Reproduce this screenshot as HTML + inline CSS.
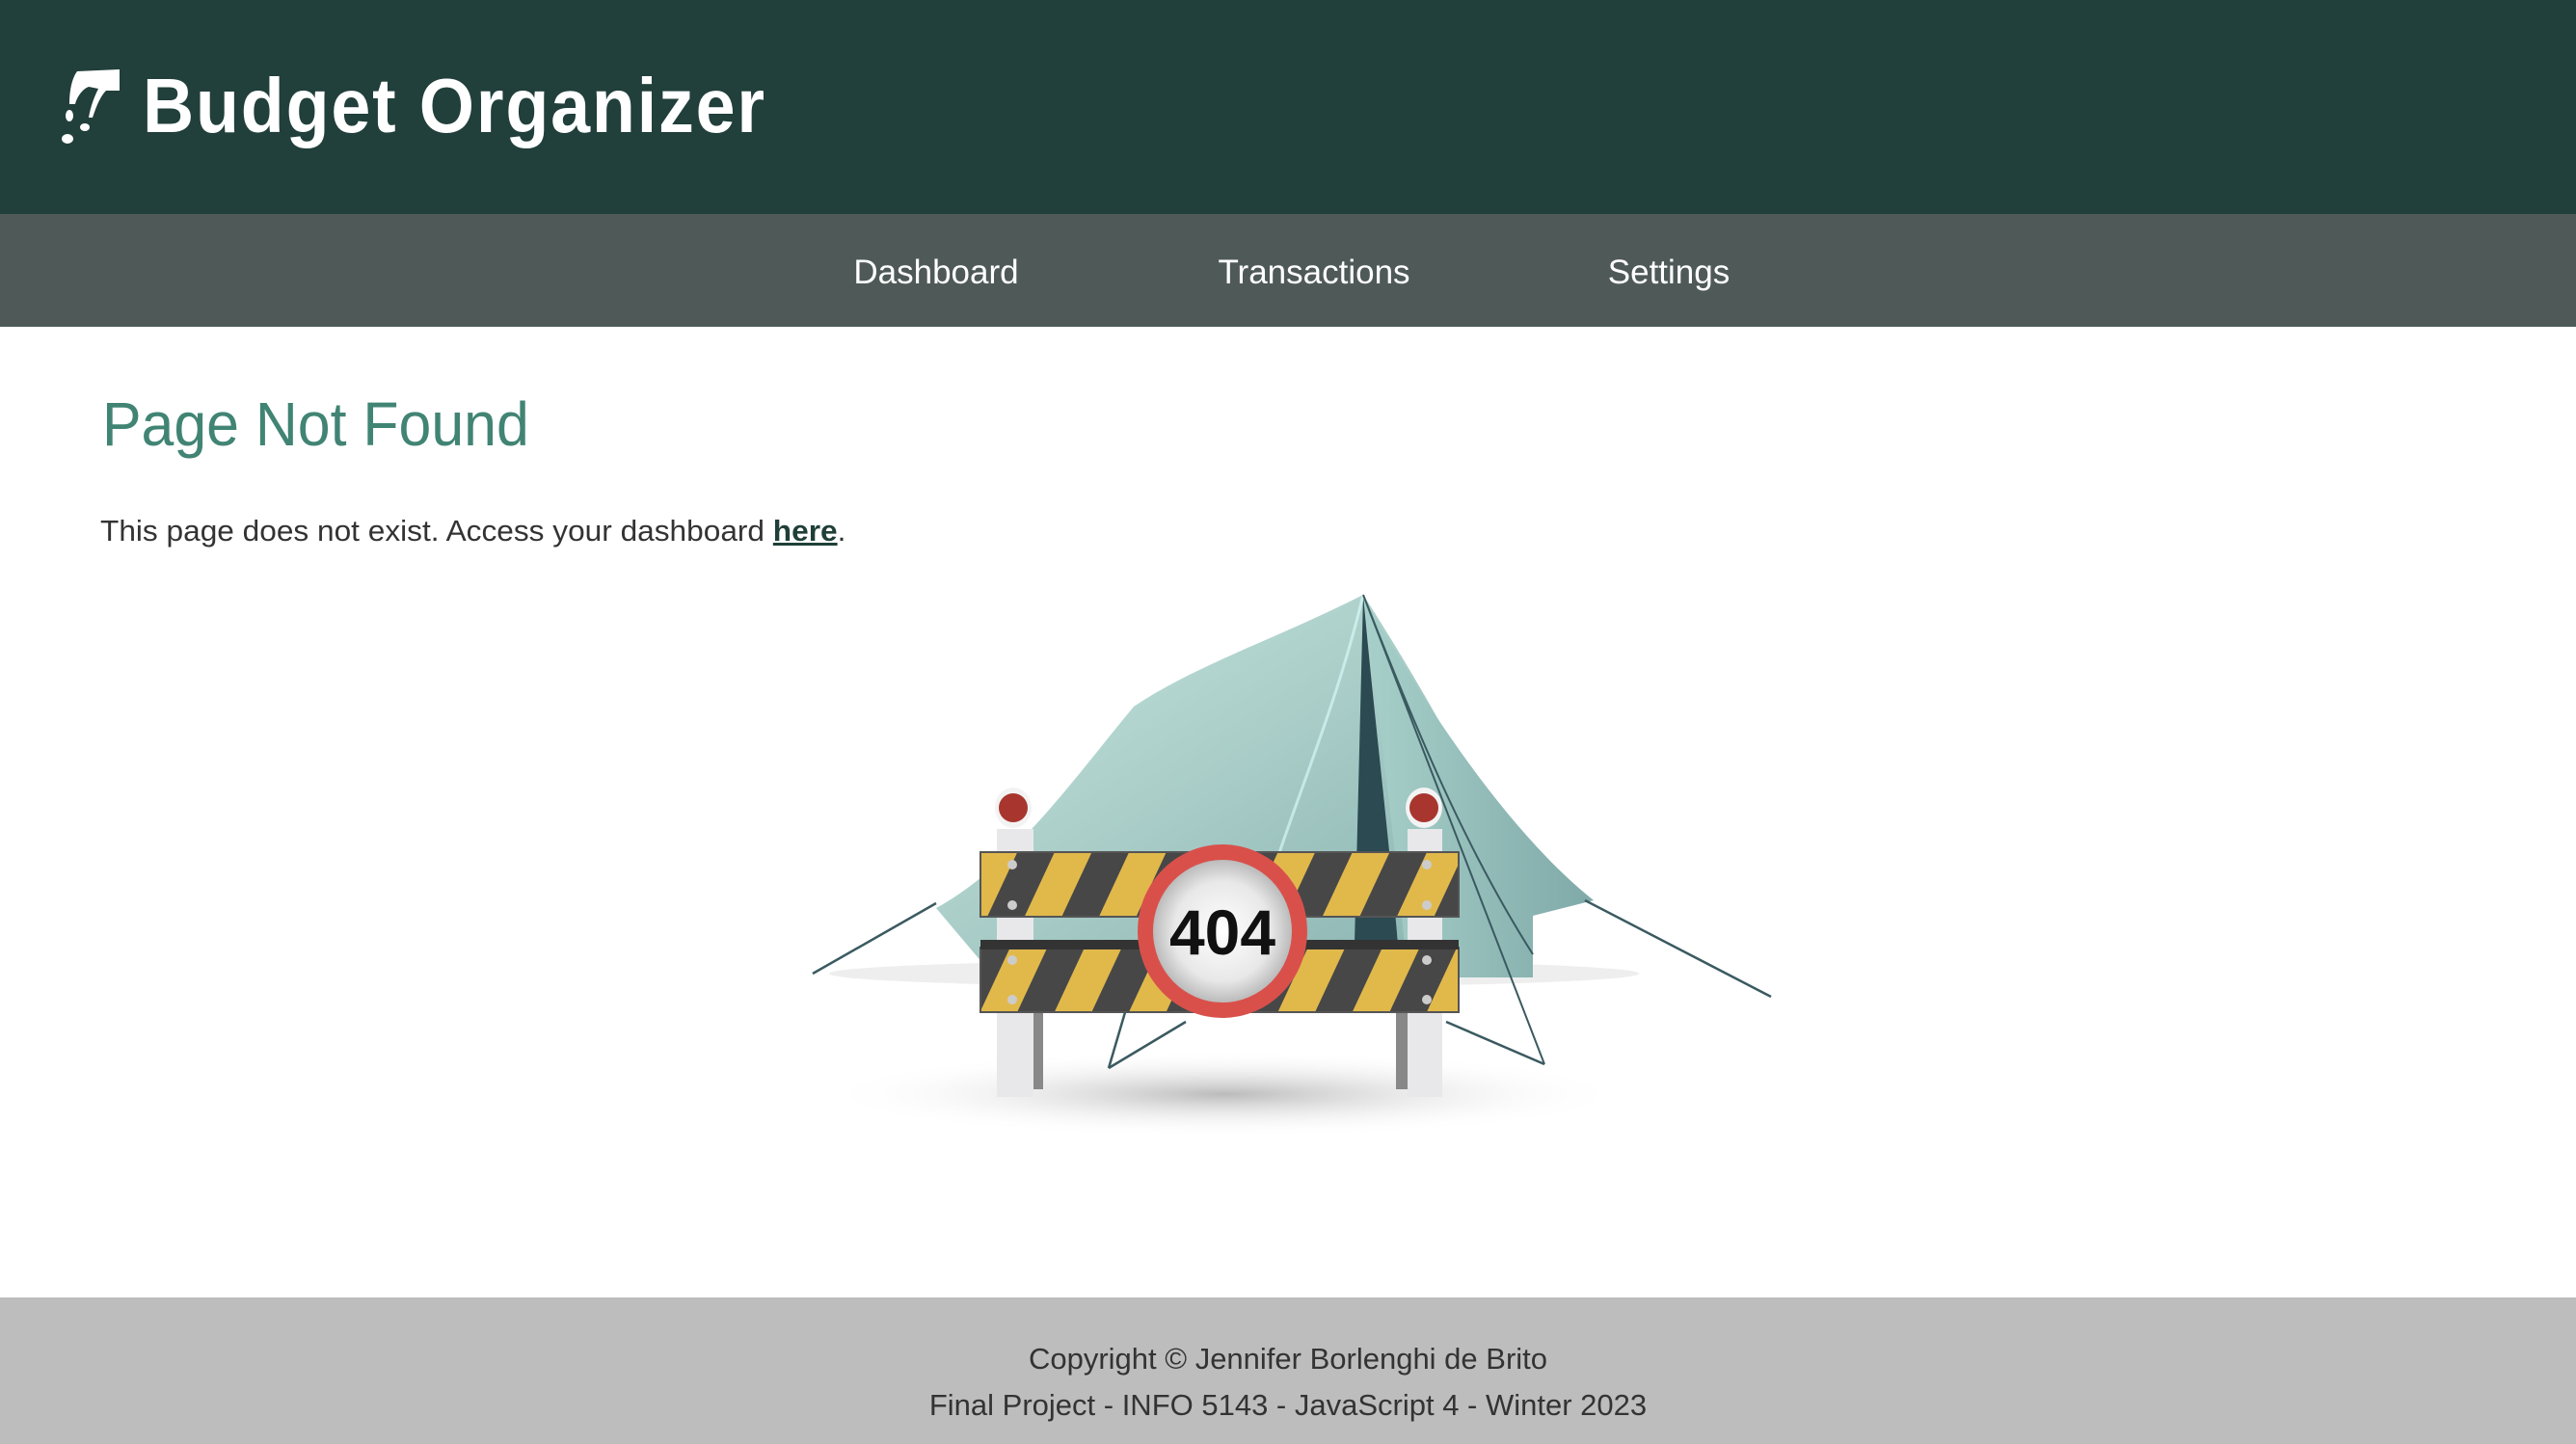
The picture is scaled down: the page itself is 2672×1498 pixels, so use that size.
<!DOCTYPE html>
<html><head><meta charset="utf-8"><style>
*{margin:0;padding:0;box-sizing:border-box}
html,body{width:2672px;height:1498px;overflow:hidden;background:#fff;font-family:"Liberation Sans",sans-serif}
#hdr{position:absolute;left:0;top:0;width:2672px;height:222px;background:#213f3b}
#logo{position:absolute;left:148px;top:64px;font-size:80px;font-weight:bold;color:#fff;transform:scaleX(0.92);transform-origin:left top;letter-spacing:2px;white-space:nowrap}
#nav{position:absolute;left:0;top:222px;width:2672px;height:117px;background:#4f5a58}
.ni{position:absolute;top:263px;color:#fff;font-size:35px;transform:translateX(-50%);white-space:nowrap}
h1{position:absolute;left:106px;top:403px;font-size:64px;font-weight:normal;color:#418474;white-space:nowrap;transform:scaleX(0.95);transform-origin:left}
p{position:absolute;left:104px;top:533px;font-size:31px;color:#333;white-space:nowrap;transform:scaleX(1.02);transform-origin:left}
p a{color:#1f3f38;font-weight:bold;text-decoration:underline}
#ftr{position:absolute;left:0;top:1346px;width:2672px;height:152px;background:#bdbdbd;color:#333;font-size:31px;text-align:center}
</style></head><body>
<div id="hdr">
<svg style="position:absolute;left:58px;top:70px" width="70" height="80" viewBox="0 0 70 80">
<path d="M22 4 L66 2 L66 24 L52 24 C46 30 42 40 38 52 L34 52 C36 40 40 30 44 22 L34 20 C28 22 22 30 20 38 L14 38 C14 26 16 12 22 4Z" fill="#fff"/>
<ellipse cx="14" cy="50" rx="4" ry="6" fill="#fff"/>
<ellipse cx="30" cy="62" rx="5" ry="4" fill="#fff"/>
<ellipse cx="12" cy="74" rx="6" ry="5" fill="#fff"/>
</svg>
<div id="logo">Budget Organizer</div>
</div>
<div id="nav"></div>
<div class="ni" style="left:971px">Dashboard</div>
<div class="ni" style="left:1363px">Transactions</div>
<div class="ni" style="left:1731px">Settings</div>
<h1>Page Not Found</h1>
<p>This page does not exist. Access your dashboard <a>here</a>.</p>

<svg style="position:absolute;left:0;top:0" width="2672" height="1498" viewBox="0 0 2672 1498">
<defs>
<linearGradient id="tl" x1="0" y1="0" x2="1" y2="1"><stop offset="0" stop-color="#c8e6df"/><stop offset="1" stop-color="#86b0ad"/></linearGradient>
<linearGradient id="tr" x1="0" y1="0" x2="1" y2="0"><stop offset="0" stop-color="#a8d0ca"/><stop offset="1" stop-color="#7fa9a8"/></linearGradient>
<radialGradient id="sh"><stop offset="0" stop-color="#bbb"/><stop offset="1" stop-color="#fff" stop-opacity="0"/></radialGradient>
<pattern id="st" width="70" height="70" patternUnits="userSpaceOnUse" patternTransform="rotate(25)">
<rect width="70" height="70" fill="#e1b94b"/><rect width="35" height="70" fill="#474747"/></pattern>
<radialGradient id="sg"><stop offset="0" stop-color="#fff"/><stop offset="0.7" stop-color="#e8e8e8"/><stop offset="1" stop-color="#bbb"/></radialGradient>
</defs>
<ellipse cx="1270" cy="1135" rx="420" ry="45" fill="url(#sh)"/>
<ellipse cx="1280" cy="1010" rx="420" ry="14" fill="#eee"/>
<path d="M1414 617 C1330 660 1240 690 1176 733 C1120 800 1050 900 971 942 L1020 1000 L1590 1010 L1590 980 L1590 960 C1560 860 1480 720 1414 617Z" fill="url(#tl)"/>
<path d="M1414 617 C1470 720 1560 860 1653 934 L1590 950 L1590 1014 L1460 1014 C1450 900 1430 740 1414 617Z" fill="url(#tr)"/>
<path d="M1414 617 L1405 980 L1450 980 C1440 860 1425 740 1414 617Z" fill="#2b4a52"/>
<path d="M1414 617 C1380 760 1320 880 1300 980" stroke="#dff" stroke-width="3" fill="none" opacity=".6"/>
<path d="M1414 617 L1602 1104 M1414 617 C1470 760 1520 880 1590 990" stroke="#3a5a60" stroke-width="2" fill="none"/>
<path d="M971 937 L843 1010 M1644 934 L1837 1034 M1150 1108 L1170 1040 M1150 1108 L1230 1060 M1602 1104 L1500 1060" stroke="#3a5a60" stroke-width="2.5" fill="none"/>
<rect x="1034" y="860" width="38" height="278" fill="#e8e8ea"/><rect x="1072" y="1050" width="10" height="80" fill="#888"/>
<rect x="1460" y="860" width="36" height="278" fill="#e8e8ea"/><rect x="1448" y="1050" width="12" height="80" fill="#888"/>
<ellipse cx="1051" cy="838" rx="19" ry="21" fill="#f3f3f3"/><circle cx="1051" cy="838" r="15" fill="#a8362e"/>
<ellipse cx="1477" cy="838" rx="19" ry="21" fill="#f3f3f3"/><circle cx="1477" cy="838" r="15" fill="#a8362e"/>
<rect x="1017" y="884" width="496" height="67" fill="url(#st)" stroke="#555" stroke-width="2"/>
<rect x="1017" y="983" width="496" height="67" fill="url(#st)" stroke="#555" stroke-width="2"/>
<rect x="1017" y="975" width="496" height="10" fill="#333"/>
<g fill="#ccc"><circle cx="1050" cy="897" r="5"/><circle cx="1050" cy="939" r="5"/><circle cx="1050" cy="996" r="5"/><circle cx="1050" cy="1037" r="5"/><circle cx="1480" cy="897" r="5"/><circle cx="1480" cy="939" r="5"/><circle cx="1480" cy="996" r="5"/><circle cx="1480" cy="1037" r="5"/></g>
<ellipse cx="1268" cy="966" rx="88" ry="90" fill="#d9504b"/>
<ellipse cx="1268" cy="966" rx="72" ry="74" fill="url(#sg)"/>
<text x="1268" y="990" text-anchor="middle" font-family="Liberation Sans" font-weight="bold" font-size="66" fill="#111">404</text>
</svg>

<div id="ftr"><div style="position:absolute;top:46px;width:100%">Copyright © Jennifer Borlenghi de Brito</div><div style="position:absolute;top:94px;width:100%">Final Project - INFO 5143 - JavaScript 4 - Winter 2023</div></div>
</body></html>
